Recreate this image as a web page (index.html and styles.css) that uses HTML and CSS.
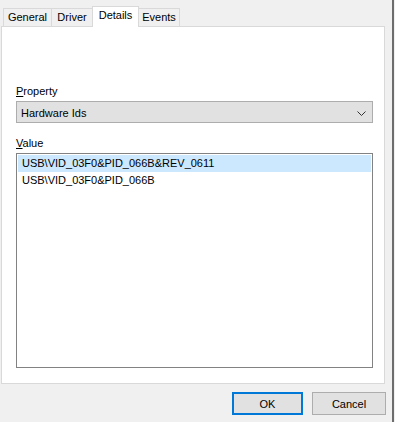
FILE: index.html
```html
<!DOCTYPE html>
<html lang="en">
<head>
    <meta charset="UTF-8">
    <title>Device Properties - Details</title>
    <link rel="stylesheet" href="styles.css">
</head>
<body>
    <div class="dialog">
        <div class="tabs">
            <div class="tab tab-general">General</div>
            <div class="tab tab-driver">Driver</div>
            <div class="tab tab-details active">Details</div>
            <div class="tab tab-events">Events</div>
        </div>
        <div class="panel">
            <div class="field-label"><u>P</u>roperty</div>
            <div class="combo">
                <span>Hardware Ids</span>
                <svg class="chevron" width="9" height="5" viewBox="0 0 9 5">
                    <polyline points="0.5,0.5 4.5,4.5 8.5,0.5" fill="none" stroke="#333" stroke-width="1"/>
                </svg>
            </div>
            <div class="field-label value-label"><u>V</u>alue</div>
            <div class="listbox">
                <div class="item selected">USB\VID_03F0&amp;PID_066B&amp;REV_0611</div>
                <div class="item">USB\VID_03F0&amp;PID_066B</div>
            </div>
        </div>
        <div class="buttons">
            <button class="btn default">OK</button>
            <button class="btn">Cancel</button>
        </div>
    </div>
</body>
</html>
```

FILE: styles.css
```css
body {
    margin: 0;
    background-color: #f0f0f0;
    font-family: "Liberation Sans", Arial, sans-serif;
    font-size: 11px;
    color: #000;
}
.dialog {
    width: 392px;
    height: 422px;
    border-right: 2px solid #6d6d6d;
    box-sizing: content-box;
}
.tabs {
    display: flex;
    align-items: flex-end;
    padding-left: 3px;
    height: 26px;
}
.tab {
    box-sizing: border-box;
    height: 18px;
    border-top: 1px solid #d9d9d9;
    border-left: 1px solid #d9d9d9;
    text-align: center;
    line-height: 17px;
    background-color: #f0f0f0;
}
.tab-general { width: 48px; }
.tab-driver { width: 41px; }
.tab-details { width: 47px; }
.tab-events { width: 41px; border-right: 1px solid #d9d9d9; }
.tab.active {
    height: 21px;
    margin-bottom: -1px;
    background-color: #fff;
    border-right: 1px solid #d9d9d9;
    line-height: 16px;
    position: relative;
}
.tab.active + .tab { border-left: none; }
.panel {
    box-sizing: border-box;
    margin-left: 1px;
    width: 384px;
    height: 358px;
    background-color: #fff;
    border: 1px solid #d9d9d9;
    padding: 58px 11px 0 14px;
}
.field-label {
    height: 16px;
    line-height: 13px;
}
.value-label {
    margin-top: 14px;
}
.combo {
    box-sizing: border-box;
    height: 22px;
    display: flex;
    align-items: center;
    justify-content: space-between;
    padding: 1px 6px 0 4px;
    background-color: #e1e1e1;
    border: 1px solid #adadad;
}
.chevron {
    margin-top: 1px;
}
.listbox {
    box-sizing: border-box;
    height: 215px;
    border: 1px solid #828282;
    padding: 1px;
}
.item {
    height: 17px;
    line-height: 17px;
    padding-left: 4px;
}
.item.selected {
    background-color: #cce8ff;
}
.buttons {
    display: flex;
    justify-content: flex-end;
    gap: 9px;
    padding: 8px 6px 0 0;
}
.btn {
    box-sizing: border-box;
    height: 23px;
    width: 74px;
    background-color: #e1e1e1;
    border: 1px solid #adadad;
    font-family: "Liberation Sans", Arial, sans-serif;
    font-size: 11px;
    color: #000;
    padding: 0;
}
.btn.default {
    width: 71px;
    border: 2px solid #0078d7;
}
```
